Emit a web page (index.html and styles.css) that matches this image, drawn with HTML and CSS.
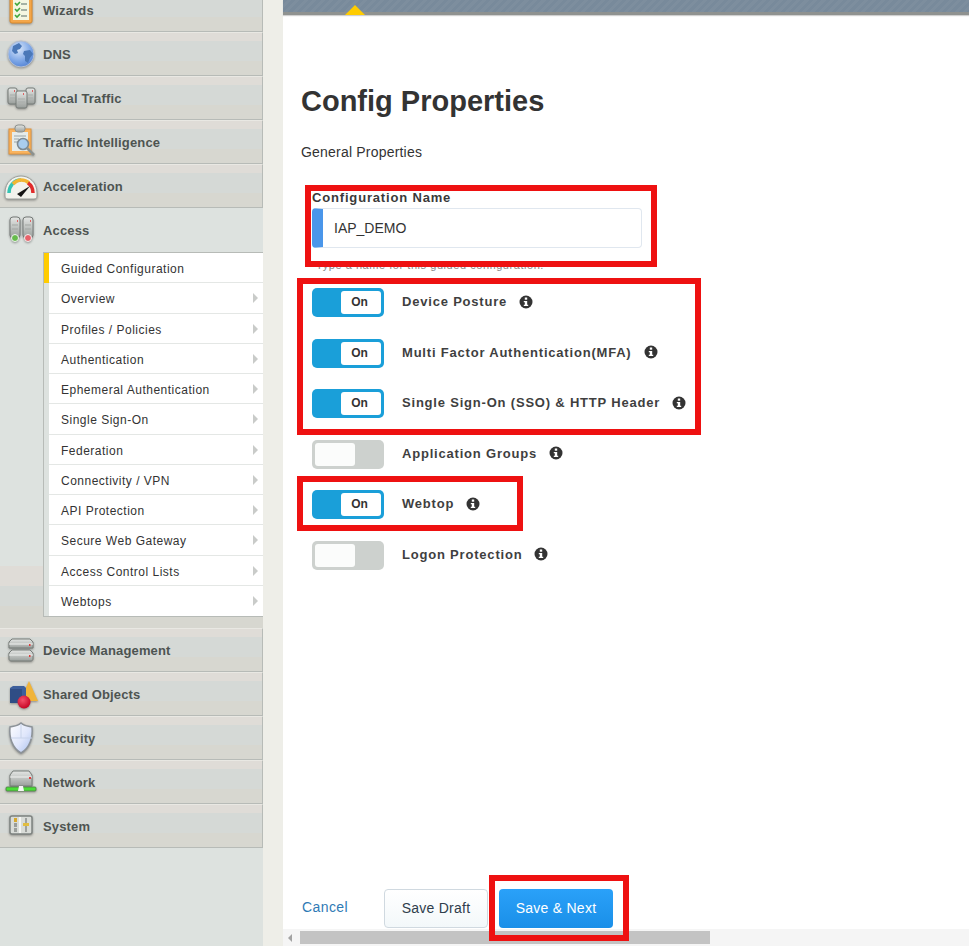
FILE: index.html
```html
<!doctype html>
<html lang="en">
<head>
  <meta charset="utf-8">
  <title>Config Properties</title>
  <link rel="stylesheet" href="styles.css">
</head>
<body>
<svg class="defs" width="0" height="0">
  <defs>
    <linearGradient id="metal" x1="0" y1="0" x2="0" y2="1"><stop offset="0" stop-color="#e4e6e4"/><stop offset="1" stop-color="#9a9f9c"/></linearGradient>
    <radialGradient id="sea" cx=".4" cy=".3" r=".8"><stop offset="0" stop-color="#dbe8fa"/><stop offset=".6" stop-color="#7ba5e6"/><stop offset="1" stop-color="#4a7bd0"/></radialGradient>
    <radialGradient id="ball" cx=".4" cy=".35" r=".7"><stop offset="0" stop-color="#f4506a"/><stop offset="1" stop-color="#c30020"/></radialGradient>
    <linearGradient id="shield" x1="0" y1="0" x2="1" y2="1"><stop offset="0" stop-color="#ffffff"/><stop offset=".55" stop-color="#dfe6fb"/><stop offset="1" stop-color="#a9c0ee"/></linearGradient>
    <g id="infoIcon">
      <circle cx="7" cy="7" r="6.500" fill="#333"/>
      <rect x="5.800" y="2.500" width="2.400" height="2.200" fill="#fff"/>
      <path d="M4.800 6h3.400v3.700h1v1.300H4.800V9.700h1V7.300h-1z" fill="#fff"/>
    </g>
  </defs>
</svg>

<nav class="sidebar">
  <div class="nav-item">
    <svg class="nav-icon" viewBox="0 0 36 36"><rect x="7" y="4" width="22" height="27" rx="2" fill="#f3a64a" stroke="#d98a2c"/><rect x="10" y="7" width="16" height="21" fill="#f4f6e2"/><path d="M12 11l2 2 3-3M12 17l2 2 3-3M12 23l2 2 3-3" fill="none" stroke="#3fa63c" stroke-width="1.6"/><path d="M18 12h6M18 18h6M18 24h6" stroke="#8a9a90" stroke-width="1.4"/></svg>
    <span>Wizards</span>
  </div>
  <div class="nav-item">
    <svg class="nav-icon" viewBox="0 0 36 36"><circle cx="18" cy="18" r="13" fill="url(#sea)" stroke="#b5bfd0"/><path d="M10 10l6-3 3 3-2 3-3 1 1 3-3 1-3-3zM21 15l6-1 3 4-3 4-2 5-3-2v-5l-2-2z" fill="#4a78b8"/></svg>
    <span>DNS</span>
  </div>
  <div class="nav-item">
    <svg class="nav-icon" viewBox="0 0 36 36"><rect x="5" y="8" width="9" height="16" rx="2" fill="url(#metal)" stroke="#777c79"/><rect x="23" y="8" width="9" height="16" rx="2" fill="url(#metal)" stroke="#777c79"/><rect x="13" y="11" width="11" height="17" rx="2" fill="url(#metal)" stroke="#777c79"/><path d="M11 11h1M29 11h1M20 14h1" stroke="#e23b3b" stroke-width="1.6"/><path d="M7 15h5M7 18h5M15 19h7M15 22h7M25 15h5M25 18h5" stroke="#a9adaa"/></svg>
    <span>Local Traffic</span>
  </div>
  <div class="nav-item">
    <svg class="nav-icon" viewBox="0 0 36 36"><rect x="6" y="5" width="22" height="25" fill="#f9b35e" stroke="#dd9440"/><rect x="9" y="8" width="16" height="19" fill="#e6ecea"/><rect x="12" y="1" width="10" height="7" rx="3" fill="url(#metal)" stroke="#8f9491"/><path d="M11 12h12M11 15h5M11 18h4" stroke="#9aa5a8"/><circle cx="20" cy="20" r="5.500" fill="#a9cdef" stroke="#7d8a93" stroke-width="1.6"/><path d="M24 24l7 7" stroke="#8b918e" stroke-width="2.6"/></svg>
    <span>Traffic Intelligence</span>
  </div>
  <div class="nav-item">
    <svg class="nav-icon" viewBox="0 0 36 36"><path d="M2 28V25C2 14 10 8 18 8s16 6 16 17v3c0 2-1 3-3 3H5c-2 0-3-1-3-3z" fill="#f2f2ec" stroke="#9a9e9b"/><path d="M6 25C6 18 11 12 18 12" fill="none" stroke="#35c4b4" stroke-width="3.500"/><path d="M10 16c2-2 5-4 8-4 3 0 6 1 8 3" fill="none" stroke="#f2b632" stroke-width="3.500"/><path d="M25 15c3 2 5 6 5 10" fill="none" stroke="#e02b2b" stroke-width="3.500"/><path d="M14 26l13-8-9 11z" fill="#151515"/></svg>
    <span>Acceleration</span>
  </div>

  <div class="nav-group">
    <div class="nav-item nav-open">
      <svg class="nav-icon" viewBox="0 0 36 36"><rect x="7" y="5" width="10" height="21" rx="3" fill="url(#metal)" stroke="#767b78"/><rect x="20" y="5" width="10" height="21" rx="3" fill="url(#metal)" stroke="#767b78"/><path d="M14 9h1M27 9h1" stroke="#e23b3b" stroke-width="1.6"/><path d="M9 13h6M9 17h6M22 13h6M22 17h6" stroke="#a3a7a4"/><circle cx="12" cy="26" r="3.500" fill="#66bb4c" stroke="#f2f4f2"/><circle cx="25" cy="26" r="3.500" fill="#e8626a" stroke="#f2f4f2"/></svg>
      <span>Access</span>
    </div>
    <ul class="submenu">
      <li class="sub-item current">Guided Configuration</li>
      <li class="sub-item has-arrow">Overview</li>
      <li class="sub-item has-arrow">Profiles / Policies</li>
      <li class="sub-item has-arrow">Authentication</li>
      <li class="sub-item has-arrow">Ephemeral Authentication</li>
      <li class="sub-item has-arrow">Single Sign-On</li>
      <li class="sub-item has-arrow">Federation</li>
      <li class="sub-item has-arrow">Connectivity / VPN</li>
      <li class="sub-item has-arrow">API Protection</li>
      <li class="sub-item has-arrow">Secure Web Gateway</li>
      <li class="sub-item has-arrow">Access Control Lists</li>
      <li class="sub-item has-arrow">Webtops</li>
    </ul>
  </div>

  <div class="nav-item">
    <svg class="nav-icon" viewBox="0 0 36 36"><path d="M6 10l3-3h18l3 3v6H6z" fill="url(#metal)" stroke="#777c79"/><path d="M6 21l3-3h18l3 3v6c0 1-1 2-2 2H8c-1 0-2-1-2-2z" fill="url(#metal)" stroke="#777c79"/><path d="M6 12h24M6 23h24" stroke="#f0f2f0"/><path d="M26 13h1.500M26 24h1.500" stroke="#e23b3b" stroke-width="2"/></svg>
    <span>Device Management</span>
  </div>
  <div class="nav-item">
    <svg class="nav-icon" viewBox="0 0 36 36"><path d="M26 5l9 20H17z" fill="#f0b43a"/><path d="M7 12l3-2h11l2 2v14H7z" fill="#3c5f9c"/><path d="M7 13h12v14H7z" fill="#2f4d85"/><circle cx="21" cy="26" r="6.500" fill="url(#ball)"/></svg>
    <span>Shared Objects</span>
  </div>
  <div class="nav-item">
    <svg class="nav-icon" viewBox="0 0 36 36"><path d="M18 3c3 3 6 3 11 4 1 10-2 21-11 26C9 28 6 17 7 7c5-1 8-1 11-4z" fill="url(#shield)" stroke="#8c9298" stroke-width="1.500"/><path d="M18 4v14H8M18 18h11" stroke="#c8d3ea" fill="none"/></svg>
    <span>Security</span>
  </div>
  <div class="nav-item">
    <svg class="nav-icon" viewBox="0 0 36 36"><path d="M7 11l3-4h16l3 4v11H7z" fill="url(#metal)" stroke="#777c79"/><path d="M7 13h22" stroke="#f0f2f0"/><path d="M26 14h2" stroke="#e23b3b" stroke-width="2"/><rect x="3" y="23" width="30" height="4" rx="1" fill="#4bdc38" stroke="#4e7a48" stroke-width=".8"/><path d="M15 27l1-5h4l1 5z" fill="#f4f6f4"/></svg>
    <span>Network</span>
  </div>
  <div class="nav-item">
    <svg class="nav-icon" viewBox="0 0 36 36"><rect x="7" y="8" width="22" height="18" rx="2" fill="#d9dcd8" stroke="#7e8380" stroke-width="1.500"/><path d="M17 9v16" stroke="#f4f5f2" stroke-width="2"/><rect x="11" y="10" width="3" height="4" fill="#d8a92e"/><rect x="11" y="15" width="3" height="4" fill="#9a9e9b"/><rect x="11" y="20" width="3" height="4" fill="#9a9e9b"/><path d="M23 10v14" stroke="#8a8e8b" stroke-width="1.500"/><rect x="20" y="15" width="6" height="3" fill="#e2bd3f"/></svg>
    <span>System</span>
  </div>
</nav>

<div class="gutter"></div>

<main class="main">
  <div class="topbar"><span class="topbar-mark"></span></div>

  <div class="content">
    <h1 class="page-title">Config Properties</h1>
    <p class="section-name">General Properties</p>

    <div class="field">
      <label class="field-label" for="configName">Configuration Name</label>
      <div class="input-wrap">
        <input class="text-input" type="text" id="configName" value="IAP_DEMO">
      </div>
      <p class="field-hint">Type a name for this guided configuration.</p>
    </div>

    <div class="toggles">
      <div class="toggle-row">
        <span class="toggle on"><span class="knob">On</span></span>
        <span class="toggle-label">Device Posture</span>
        <svg class="info" viewBox="0 0 14 14"><use href="#infoIcon"/></svg>
      </div>
      <div class="toggle-row">
        <span class="toggle on"><span class="knob">On</span></span>
        <span class="toggle-label">Multi Factor Authentication(MFA)</span>
        <svg class="info" viewBox="0 0 14 14"><use href="#infoIcon"/></svg>
      </div>
      <div class="toggle-row">
        <span class="toggle on"><span class="knob">On</span></span>
        <span class="toggle-label">Single Sign-On (SSO) &amp; HTTP Header</span>
        <svg class="info" viewBox="0 0 14 14"><use href="#infoIcon"/></svg>
      </div>
      <div class="toggle-row">
        <span class="toggle"><span class="knob"></span></span>
        <span class="toggle-label">Application Groups</span>
        <svg class="info" viewBox="0 0 14 14"><use href="#infoIcon"/></svg>
      </div>
      <div class="toggle-row">
        <span class="toggle on"><span class="knob">On</span></span>
        <span class="toggle-label">Webtop</span>
        <svg class="info" viewBox="0 0 14 14"><use href="#infoIcon"/></svg>
      </div>
      <div class="toggle-row">
        <span class="toggle"><span class="knob"></span></span>
        <span class="toggle-label">Logon Protection</span>
        <svg class="info" viewBox="0 0 14 14"><use href="#infoIcon"/></svg>
      </div>
    </div>

    <div class="actions">
      <a class="cancel" href="#">Cancel</a>
      <button class="btn btn-draft" type="button">Save Draft</button>
      <button class="btn btn-next" type="button">Save &amp; Next</button>
    </div>
  </div>

  <div class="scrollbar">
    <span class="scroll-arrow"></span>
    <span class="scroll-thumb"></span>
  </div>

  <!-- red annotation boxes drawn over the screenshot -->
  <div class="mark mark-name"></div>
  <div class="mark mark-toggles"></div>
  <div class="mark mark-webtop"></div>
  <div class="mark mark-save"></div>
</main>
</body>
</html>
```

FILE: styles.css
```css
html, body{
  margin: 0;
  height: 100%;
}

body{
  display: flex;
  height: 946px;
  overflow: hidden;
  background: #fff;
  font-family: "Liberation Sans", Arial, sans-serif;
  color: #333;
}

.defs{
  position: absolute;
}

/* left nav */
.sidebar{
  width: 263px;
  flex: none;
  margin-top: -12px;
  background: #dde2df;
}

.nav-item{
  display: flex;
  align-items: center;
  box-sizing: border-box;
  height: 44px;
  padding-left: 3px;
  border-top: 1px solid #e9e8e3;
  border-right: 1px solid #b7bbb7;
  border-bottom: 1px solid #b7bbb7;
  background: linear-gradient(to bottom, #dfdcd7 0, #dfdcd7 8px, #d5d9d6 8px, #d5d9d6 28px, #d7d7d0 28px);
  font-size: 13px;
  font-weight: bold;
  letter-spacing: 0.15px;
  color: #4e5451;
}

.nav-group{
  padding-bottom: 11px;
  background: linear-gradient(to top, #d7d7d0 0, #d7d7d0 22px, #d5d9d6 22px, #d5d9d6 42px, #dfdcd7 42px, #dfdcd7 62px, #dde2df 62px);
}

.nav-open{
  border-color: transparent;
  background: none;
}

.nav-icon{
  width: 36px;
  height: 36px;
  flex: none;
  margin-right: 4px;
  filter: drop-shadow(0 1px 1px rgba(0, 0, 0, 0.35));
}

.submenu{
  list-style: none;
  margin: 0 0 0 43px;
  padding: 0;
  background: #dde2df;
  border-top: 1px solid #b7bbb7;
  border-left: 1px solid #b7bbb7;
  border-bottom: 1px solid #b7bbb7;
}

.sub-item{
  position: relative;
  box-sizing: border-box;
  height: 30.25px;
  line-height: 32px;
  padding-left: 12px;
  margin-left: 5px;
  background: #fff;
  border-bottom: 1px solid #e4e7e5;
  font-size: 12px;
  letter-spacing: 0.5px;
  color: #333;
}

.sub-item:last-child{
  border-bottom: none;
}

.sub-item.current{
  box-shadow: -5px 0 0 #ffcc00;
}

.has-arrow::after{
  content: "";
  position: absolute;
  right: 5px;
  top: 10px;
  border-left: 5px solid #c9cbc9;
  border-top: 5px solid transparent;
  border-bottom: 5px solid transparent;
}

.gutter{
  width: 20px;
  flex: none;
  background: #eeeee8;
}

/* main area */
.main{
  flex: 1;
  display: flex;
  flex-direction: column;
  min-width: 0;
}

.topbar{
  position: relative;
  flex: none;
  height: 12px;
  background: repeating-linear-gradient(135deg, #788a9b 0, #788a9b 3px, #7d8e9e 3px, #7d8e9e 6px);
  border-bottom: 3px solid #8f9290;
  box-shadow: 0 1px 1px #d0d0d0;
}

.topbar-mark{
  position: absolute;
  left: 62px;
  top: 5px;
  border-left: 10px solid transparent;
  border-right: 10px solid transparent;
  border-bottom: 10px solid #ffcc00;
}

.content{
  flex: 1;
  display: flex;
  flex-direction: column;
  padding-left: 18px;
}

.page-title{
  margin: 68px 0 0;
  font-size: 29px;
  line-height: 36px;
  font-weight: bold;
  color: #333;
}

.section-name{
  margin: 23px 0 0;
  font-size: 14px;
  line-height: 20px;
  letter-spacing: 0.2px;
  color: #333;
}

.field{
  margin: 28px 0 0 11px;
}

.field-label{
  display: block;
  font-size: 13px;
  line-height: 16px;
  font-weight: bold;
  letter-spacing: 0.83px;
  color: #3a3a3a;
}

.input-wrap{
  width: 330px;
  margin-top: 2px;
}

.text-input{
  display: block;
  box-sizing: border-box;
  width: 100%;
  height: 40px;
  padding: 0 10px 0 11px;
  border: 1px solid #e0e7ef;
  border-left: 11px solid #4a96ea;
  border-radius: 4px;
  font-family: "Liberation Sans", Arial, sans-serif;
  font-size: 14px;
  color: #333;
  background: #fff;
}

.field-hint{
  margin: 9px 0 0 4px;
  font-size: 11px;
  line-height: 16px;
  letter-spacing: 0.55px;
  color: #888;
}

.toggles{
  display: flex;
  flex-direction: column;
  gap: 21.6px;
  margin: 15px 0 0 11px;
}

.toggle-row{
  display: flex;
  align-items: center;
  height: 29px;
}

.toggle{
  display: flex;
  box-sizing: border-box;
  width: 72px;
  height: 29px;
  padding: 3px;
  border-radius: 5px;
  background: #cdd1ce;
  margin-right: 18px;
}

.toggle.on{
  justify-content: flex-end;
  background: #1a9fd9;
}

.knob{
  box-sizing: border-box;
  width: 40px;
  height: 23px;
  padding-right: 3px;
  border-radius: 3px;
  background: #fff;
  text-align: center;
  font-size: 12px;
  line-height: 23px;
  font-weight: bold;
  color: #333;
}

.toggle:not(.on) .knob{
  background: #fbfcfb;
}

.toggle-label{
  margin-top: -2px;
  font-size: 13px;
  font-weight: bold;
  letter-spacing: 0.8px;
  color: #3f3f3f;
}

.info{
  width: 14px;
  height: 14px;
  margin: -2px 0 0 12px;
}

.actions{
  display: flex;
  align-items: center;
  margin-top: auto;
  margin-bottom: 1px;
  height: 40px;
}

.cancel{
  width: 82px;
  margin-top: -2px;
  padding-left: 1px;
  font-size: 14px;
  letter-spacing: 0.4px;
  color: #2f7ab5;
  text-decoration: none;
}

.btn{
  box-sizing: border-box;
  height: 39px;
  border-radius: 4px;
  font-family: "Liberation Sans", Arial, sans-serif;
  font-size: 14px;
  letter-spacing: 0.25px;
}

.btn-draft{
  width: 104px;
  margin-right: 11px;
  border: 1px solid #d0d9e0;
  background: linear-gradient(to bottom, #fff, #f3f8fa);
  color: #2f3e4c;
}

.btn-next{
  width: 114px;
  border: none;
  background: linear-gradient(to bottom, #2aa1f9, #1a8fe8);
  color: #fff;
}

.scrollbar{
  display: flex;
  align-items: center;
  flex: none;
  height: 17px;
  padding-left: 5px;
  background: #f5f5f5;
}

.scroll-arrow{
  border-right: 4px solid #a3a3a3;
  border-top: 4px solid transparent;
  border-bottom: 4px solid transparent;
}

.scroll-thumb{
  width: 410px;
  height: 13px;
  margin-left: 8px;
  background: #c3c3c3;
}

/* annotations */
.mark{
  position: absolute;
  box-sizing: border-box;
  border: 6px solid #ee1111;
}

.mark-name{
  left: 305px;
  top: 185px;
  width: 352px;
  height: 82px;
}

.mark-toggles{
  left: 297px;
  top: 278px;
  width: 404px;
  height: 157px;
}

.mark-webtop{
  left: 297px;
  top: 476px;
  width: 226px;
  height: 55px;
}

.mark-save{
  left: 489px;
  top: 875px;
  width: 140px;
  height: 66px;
}
```
